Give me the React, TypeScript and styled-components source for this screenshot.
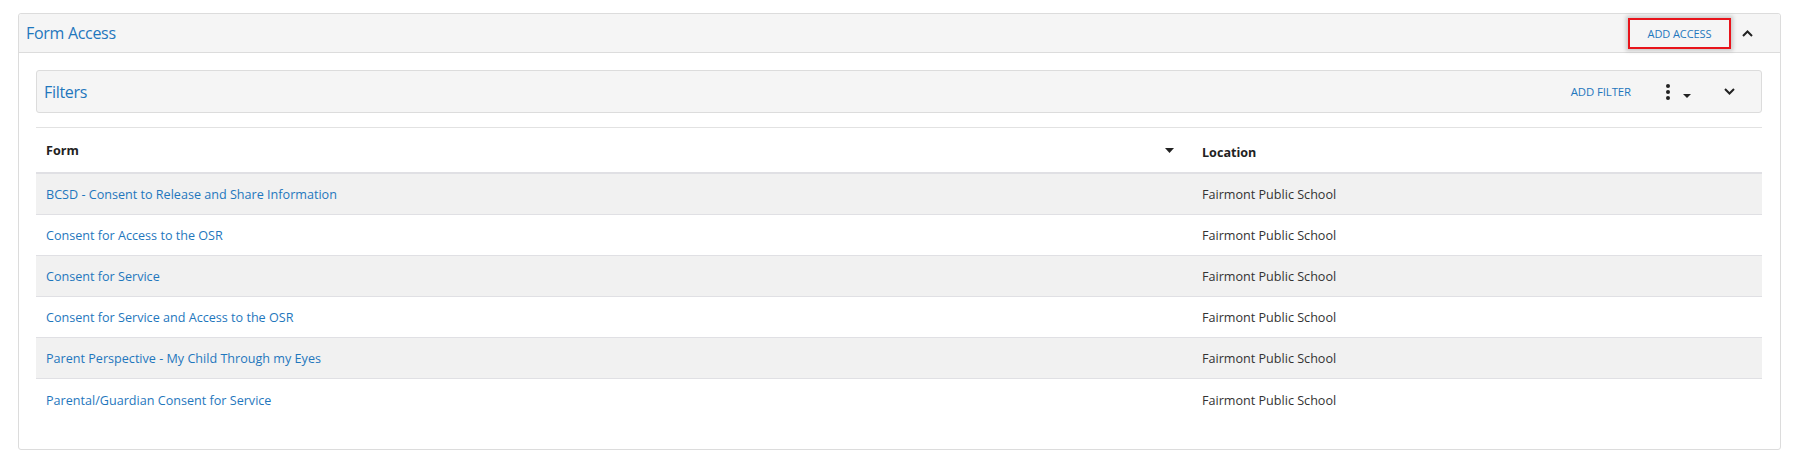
import React from "react";
import styled, { createGlobalStyle } from "styled-components";

const Global = createGlobalStyle`
  html, body { margin: 0; padding: 0; background: #fff; }
  body { font-family: "Open Sans", "Noto Sans", Arial, sans-serif; color: #333; }
  * { box-sizing: border-box; }
`;

const Page = styled.div`
  padding: 13px 30px 0 18px;
`;

const Card = styled.section`
  border: 1px solid #dcdcdc;
  border-radius: 3px;
  background: #fff;
`;

const CardHeader = styled.header`
  display: flex;
  align-items: center;
  height: 39px;
  padding: 0 17px 0 7px;
  background: #f5f5f5;
  border-bottom: 1px solid #dcdcdc;
  border-radius: 3px 3px 0 0;
`;

const Title = styled.h2`
  margin: 0;
  flex: 1;
  font-weight: 400;
  font-size: 16px;
  color: #1f77bd;
  letter-spacing: -0.3px;
`;

const AccessButton = styled.button`
  width: 103px;
  height: 31px;
  margin-top: 1px;
  border: 2px solid #e8141b;
  background: #f5f5f5;
  color: #1f77bd;
  font-family: inherit;
  font-size: 11px;
  letter-spacing: -0.1px;
  box-shadow: 0 0 4px 2px rgba(0, 0, 0, 0.18);
  padding: 0;
`;

const IconButton = styled.span<{ $w?: number }>`
  display: inline-flex;
  align-items: center;
  justify-content: center;
  width: ${(p) => p.$w ?? 30}px;
  height: 30px;
  color: #222;
`;

const CardBody = styled.div`
  padding: 17px 18px 29px 17px;
`;

const FilterPanel = styled.div`
  display: flex;
  align-items: center;
  height: 43px;
  padding: 0 17px 0 7px;
  background: #f5f5f5;
  border: 1px solid #dcdcdc;
  border-radius: 3px;
`;

const TextAction = styled.span`
  font-size: 11.4px;
  color: #1f77bd;
  letter-spacing: -0.1px;
  margin-right: 34px;
`;

const MenuToggle = styled.span`
  display: inline-flex;
  align-items: center;
  margin-right: 23px;
`;

const Table = styled.div`
  margin-top: 14px;
  border-top: 1px solid #e2e2e2;
`;

const Row = styled.div<{ $head?: boolean; $alt?: boolean; $last?: boolean }>`
  display: grid;
  grid-template-columns: 1156px 1fr;
  align-items: center;
  height: ${(p) => (p.$head ? 46 : 41)}px;
  background: ${(p) => (p.$alt ? "#f1f1f1" : "#fff")};
  border-bottom: ${(p) =>
    p.$head ? "2px solid #e0e0e4" : p.$last ? "none" : "1px solid #e0e0e4"};
`;

const HeadCell = styled.div<{ $drop?: number }>`
  display: flex;
  align-items: center;
  justify-content: space-between;
  padding: ${(p) => p.$drop ?? 0}px 18px 0 10px;
  font-size: 12.6px;
  font-weight: 700;
  color: #222;
`;

const Cell = styled.div<{ $link?: boolean }>`
  padding: 1px 10px 0;
  font-size: 12.6px;
  color: ${(p) => (p.$link ? "#1f77bd" : "#333")};
`;

const Caret = () => (
  <svg width="9" height="5" viewBox="0 0 9 5">
    <path d="M0 0h9L4.5 5z" fill="#222" />
  </svg>
);

const Chevron = ({ up }: { up?: boolean }) => (
  <svg width="11" height="7" viewBox="0 0 11 7">
    <path
      d={up ? "M1 6l4.5-4.5L10 6" : "M1 1l4.5 4.5L10 1"}
      fill="none"
      stroke="#222"
      strokeWidth="2"
    />
  </svg>
);

const Kebab = () => (
  <svg width="26" height="18" viewBox="0 0 26 18">
    <circle cx="3" cy="3" r="2" fill="#222" />
    <circle cx="3" cy="9" r="2" fill="#222" />
    <circle cx="3" cy="15" r="2" fill="#222" />
    <path d="M18 11h8l-4 4z" fill="#222" />
  </svg>
);

const rows = [
  "BCSD - Consent to Release and Share Information",
  "Consent for Access to the OSR",
  "Consent for Service",
  "Consent for Service and Access to the OSR",
  "Parent Perspective - My Child Through my Eyes",
  "Parental/Guardian Consent for Service",
];

export default function App() {
  return (
    <Page>
      <Global />
      <Card>
        <CardHeader>
          <Title>Form Access</Title>
          <AccessButton>ADD ACCESS</AccessButton>
          <IconButton $w={32}>
            <Chevron up />
          </IconButton>
        </CardHeader>
        <CardBody>
          <FilterPanel>
            <Title>Filters</Title>
            <TextAction>ADD FILTER</TextAction>
            <MenuToggle>
              <Kebab />
            </MenuToggle>
            <IconButton $w={30}>
              <Chevron />
            </IconButton>
          </FilterPanel>
          <Table>
            <Row $head>
              <HeadCell>
                <span>Form</span>
                <Caret />
              </HeadCell>
              <HeadCell $drop={4}>Location</HeadCell>
            </Row>
            {rows.map((r, i) => (
              <Row key={r} $alt={i % 2 === 0} $last={i === rows.length - 1}>
                <Cell $link>{r}</Cell>
                <Cell>Fairmont Public School</Cell>
              </Row>
            ))}
          </Table>
        </CardBody>
      </Card>
    </Page>
  );
}
